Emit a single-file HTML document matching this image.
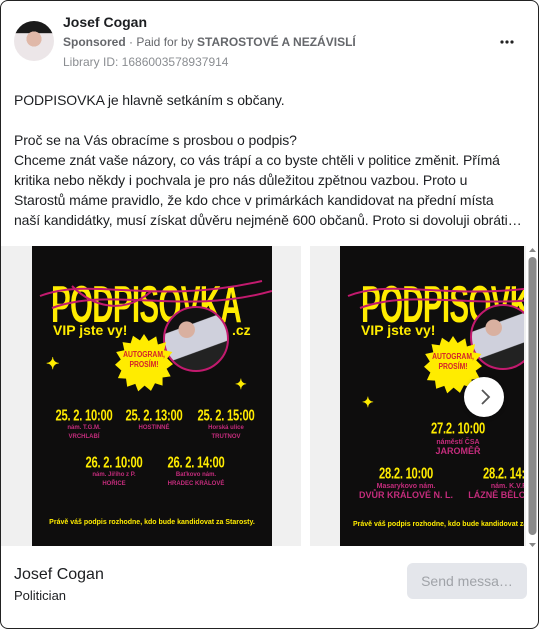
<!DOCTYPE html>
<html><head><meta charset="utf-8"><style>
*{margin:0;padding:0;box-sizing:border-box}
body{width:539px;height:629px;background:#fff;font-family:"Liberation Sans",Arial,sans-serif;overflow:hidden;position:relative}
.card{position:absolute;left:0;top:0;width:539px;height:629px;border:1px solid #222;border-radius:8px;overflow:hidden;background:#fff}
.a{position:absolute;white-space:nowrap}
.poster{position:absolute;background:#0e0d0d;overflow:hidden}
.ttl{position:absolute;color:#ffec00;font-weight:bold;font-size:40px;letter-spacing:-1px;transform-origin:0 0;transform:scale(0.74,1.3);line-height:1}
.y{color:#ffec00;font-weight:bold}
.d{position:absolute;color:#ffec00;font-weight:bold;font-size:14px;transform:translateX(-50%) scale(0.8,1.1);white-space:nowrap;letter-spacing:-0.3px}
.s{position:absolute;color:#c42c7c;font-weight:bold;font-size:6px;transform:translateX(-50%);white-space:nowrap;text-align:center;line-height:9px}
.burst{position:absolute;width:58px;height:58px;background:#ffec00;clip-path:polygon(50% 0,58% 12%,71% 4%,74% 18%,88% 14%,85% 28%,99% 31%,90% 42%,100% 52%,89% 60%,96% 73%,82% 75%,82% 89%,69% 85%,62% 98%,51% 89%,40% 99%,35% 86%,21% 91%,19% 77%,5% 76%,11% 63%,0 53%,10% 44%,2% 31%,16% 28%,13% 14%,27% 16%,31% 3%,43% 11%)}
.bt{position:absolute;color:#d4232a;font-weight:bold;font-size:8px;text-align:center;line-height:10px;transform:scaleX(0.85)}
.ph{position:absolute;border-radius:50%;border:2px solid #c21a6e;background:radial-gradient(circle at 35% 35%,#d9b0a0 0 14%,transparent 15%),linear-gradient(160deg,#111 0 30%,#cfd0dc 31% 65%,#222 66%)}
</style></head><body>
<div class="card">
 <div class="a" style="left:13px;top:20px;width:40px;height:40px;border-radius:50%;background:radial-gradient(circle at 50% 45%,#e0b8a8 0 25%,transparent 26%),linear-gradient(#1a1a1a 0 30%,#ece6e8 31%)"></div>
 <div class="a" style="left:62px;top:13px;font-size:14px;font-weight:bold;color:#1c1e21">Josef Cogan</div>
 <div class="a" style="left:62px;top:34px;font-size:12px;color:#65676b"><b>Sponsored</b> · Paid for by <b>STAROSTOVÉ A NEZÁVISLÍ</b></div>
 <div class="a" style="left:62px;top:54px;font-size:12px;color:#8a8d91">Library ID: 1686003578937914</div>
 <svg class="a" style="left:498px;top:38px" width="16" height="6"><circle cx="3" cy="3" r="1.6" fill="#222"/><circle cx="8" cy="3" r="1.6" fill="#222"/><circle cx="13" cy="3" r="1.6" fill="#222"/></svg>
 <div class="a" style="left:13px;top:89px;font-size:14px;line-height:20px;color:#1c1e21;letter-spacing:-0.1px">PODPISOVKA je hlavně setkáním s občany.<br><br>Proč se na Vás obracíme s prosbou o podpis?<br>Chceme znát vaše názory, co vás trápí a co byste chtěli v politice změnit. Přímá<br>kritika nebo někdy i pochvala je pro nás důležitou zpětnou vazbou. Proto u<br>Starostů máme pravidlo, že kdo chce v primárkách kandidovat na přední místa<br>naší kandidátky, musí získat důvěru nejméně 600 občanů. Proto si dovoluji obráti…</div>

 <div class="a" style="left:0;top:245px;width:300px;height:300px;background:#f0f0f0"></div>
 <div class="a" style="left:309px;top:245px;width:230px;height:300px;background:#f0f0f0"></div>

 <div class="poster" style="left:31px;top:245px;width:240px;height:300px">
  <div class="ttl" style="left:19px;top:33px">PODPISOVKA</div>
  <svg class="a" style="left:0;top:0" width="240" height="120"><path d="M8 50 C60 30 120 60 230 35 M20 62 C80 40 150 70 240 45 M40 40 C60 60 90 70 120 45" stroke="#c21a6e" stroke-width="2" fill="none"/></svg>
  <div class="a y" style="left:21px;top:76px;font-size:14px">VIP jste vy!</div>
  <div class="a y" style="left:200px;top:76px;font-size:14px">.cz</div>
  <div class="ph" style="left:131px;top:60px;width:66px;height:66px"></div>
  <div class="burst" style="left:83px;top:88px"></div>
  <div class="bt" style="left:86px;top:104px;width:52px">AUTOGRAM,<br>PROSÍM!</div>
  <div class="a y" style="left:14px;top:108px;font-size:16px">✦</div>
  <div class="a y" style="left:203px;top:130px;font-size:14px">✦</div>
  <div class="d" style="left:52px;top:161px">25. 2. 10:00</div>
  <div class="d" style="left:122px;top:161px">25. 2. 13:00</div>
  <div class="d" style="left:194px;top:161px">25. 2. 15:00</div>
  <div class="s" style="left:52px;top:178px">nám. T.G.M.<br>VRCHLABÍ</div>
  <div class="s" style="left:122px;top:178px">HOSTINNÉ</div>
  <div class="s" style="left:194px;top:178px">Horská ulice<br>TRUTNOV</div>
  <div class="d" style="left:82px;top:208px">26. 2. 10:00</div>
  <div class="d" style="left:164px;top:208px">26. 2. 14:00</div>
  <div class="s" style="left:82px;top:225px">nám. Jiřího z P.<br>HOŘICE</div>
  <div class="s" style="left:164px;top:225px">Baťkovo nám.<br>HRADEC KRÁLOVÉ</div>
  <div class="a y" style="left:120px;top:273px;font-size:7px;transform:translateX(-50%)">Právě váš podpis rozhodne, kdo bude kandidovat za Starosty.</div>
 </div>

 <div class="poster" style="left:339px;top:245px;width:184px;height:300px">
  <div class="ttl" style="left:21px;top:33px">PODPISOVKA</div>
  <svg class="a" style="left:0;top:0" width="184" height="120"><path d="M8 50 C60 30 120 60 230 35 M20 62 C80 40 150 70 240 45" stroke="#c21a6e" stroke-width="2" fill="none"/></svg>
  <div class="a y" style="left:21px;top:76px;font-size:14px">VIP jste vy!</div>
  <div class="ph" style="left:130px;top:58px;width:66px;height:66px"></div>
  <div class="burst" style="left:84px;top:90px"></div>
  <div class="bt" style="left:87px;top:106px;width:52px">AUTOGRAM,<br>PROSÍM!</div>
  <div class="a y" style="left:22px;top:148px;font-size:14px">✦</div>
  <div class="d" style="left:118px;top:174px">27.2. 10:00</div>
  <div class="s" style="left:118px;top:192px;font-size:7px">náměstí ČSA<br><span style="font-size:9px">JAROMĚŘ</span></div>
  <div class="d" style="left:66px;top:219px">28.2. 10:00</div>
  <div class="d" style="left:170px;top:219px">28.2. 14:00</div>
  <div class="s" style="left:66px;top:236px;font-size:7px">Masarykovo nám.<br><span style="font-size:9px">DVŮR KRÁLOVÉ N. L.</span></div>
  <div class="s" style="left:170px;top:236px;font-size:7px">nám. K.V.R.<br><span style="font-size:9px">LÁZNĚ BĚLOHRAD</span></div>
  <div class="a y" style="left:13px;top:275px;font-size:7px">Právě váš podpis rozhodne, kdo bude kandidovat za Starosty.</div>
 </div>

 <div class="a" style="left:463px;top:376px;width:40px;height:40px;border-radius:50%;background:#fff;box-shadow:0 1px 4px rgba(0,0,0,.3)"></div>
 <svg class="a" style="left:463px;top:376px" width="40" height="40"><path d="M18 13 L25 20 L18 27" stroke="#555" stroke-width="1.8" fill="none"/></svg>

 <div class="a" style="left:525px;top:243px;width:13px;height:307px;background:#fff"></div>
 <svg class="a" style="left:525px;top:243px" width="13" height="307"><path d="M3 8 L6.5 4 L10 8Z M3 299 L6.5 303 L10 299Z" fill="#888"/><rect x="2.5" y="13" width="8" height="278" rx="4" fill="#8a8a8a"/></svg>

 <div class="a" style="left:13px;top:565px;font-size:16px;color:#1c1e21">Josef Cogan</div>
 <div class="a" style="left:13px;top:587px;font-size:13px;color:#1c1e21">Politician</div>
 <div class="a" style="left:406px;top:562px;width:120px;height:36px;border-radius:6px;background:#e4e6eb;color:#a0a3a8;font-size:14px;line-height:36px;text-align:center">Send messa…</div>
</div>
</body></html>
